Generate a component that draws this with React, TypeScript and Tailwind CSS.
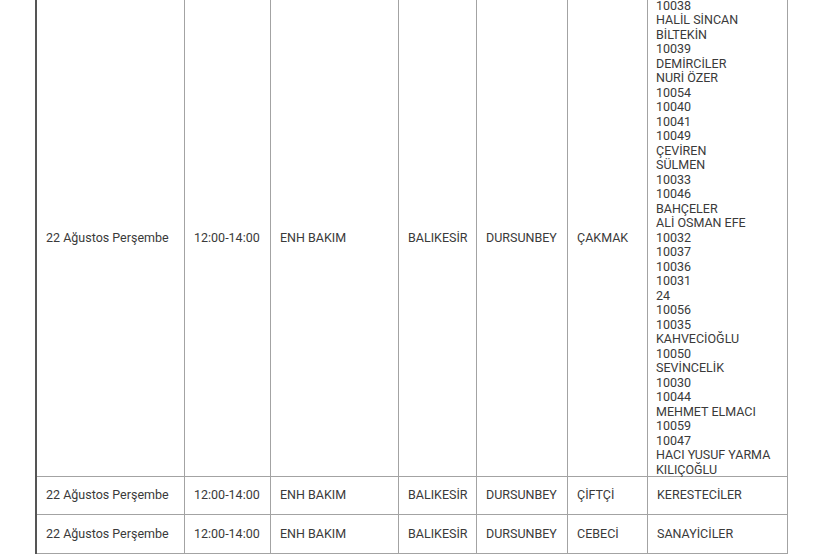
import React from 'react';

const widths = ['w-[148px]', 'w-[86px]', 'w-[128px]', 'w-[78px]', 'w-[91px]', 'w-[80px]', 'w-[140px]'];

const feeders = [
  '10038', 'HALİL SİNCAN', 'BİLTEKİN', '10039', 'DEMİRCİLER', 'NURİ ÖZER', '10054', '10040', '10041', '10049',
  'ÇEVİREN', 'SÜLMEN', '10033', '10046', 'BAHÇELER', 'ALİ OSMAN EFE', '10032', '10037', '10036', '10031', '24',
  '10056', '10035', 'KAHVECİOĞLU', '10050', 'SEVİNCELİK', '10030', '10044', 'MEHMET ELMACI', '10059', '10047',
  'HACI YUSUF YARMA', 'KILIÇOĞLU',
];

const rows = [
  { cells: ['22 Ağustos Perşembe', '12:00-14:00', 'ENH BAKIM', 'BALIKESİR', 'DURSUNBEY', 'ÇİFTÇİ', 'KERESTECİLER'], h: 'h-[38px]' },
  { cells: ['22 Ağustos Perşembe', '12:00-14:00', 'ENH BAKIM', 'BALIKESİR', 'DURSUNBEY', 'CEBECİ', 'SANAYİCİLER'], h: 'h-[39px]' },
];

const Cell = ({ i, children }: { i: number; children: React.ReactNode }) => (
  <div className={`${widths[i]} shrink-0 flex items-center pl-[9px] border-r border-[#a3a3a3]`}>{children}</div>
);

export default function App() {
  return (
    <div
      className="w-[820px] h-[555px] overflow-hidden bg-white text-[12.5px] leading-[14.5px] text-[#3a3a3a]"
      style={{ fontFamily: 'Roboto, "Liberation Sans", sans-serif' }}
    >
      <div className="ml-[35px] w-[753px] border-l-2 border-[#555]">
        {/* tall row, top cut off */}
        <div className="flex h-[477px] border-b border-[#a3a3a3]">
          {['22 Ağustos Perşembe', '12:00-14:00', 'ENH BAKIM', 'BALIKESİR', 'DURSUNBEY', 'ÇAKMAK'].map((t, i) => (
            <Cell key={i} i={i}>{t}</Cell>
          ))}
          <div className="w-[140px] shrink-0 flex flex-col justify-end overflow-hidden pl-[8px] mb-[-1px] border-r border-[#a3a3a3]">
            {feeders.map((f, i) => (
              <div key={i} className="shrink-0">{f}</div>
            ))}
          </div>
        </div>
        {rows.map((r, ri) => (
          <div key={ri} className={`flex ${r.h} border-b border-[#a3a3a3]`}>
            {r.cells.map((t, i) => (
              <Cell key={i} i={i}>{t}</Cell>
            ))}
          </div>
        ))}
      </div>
    </div>
  );
}
